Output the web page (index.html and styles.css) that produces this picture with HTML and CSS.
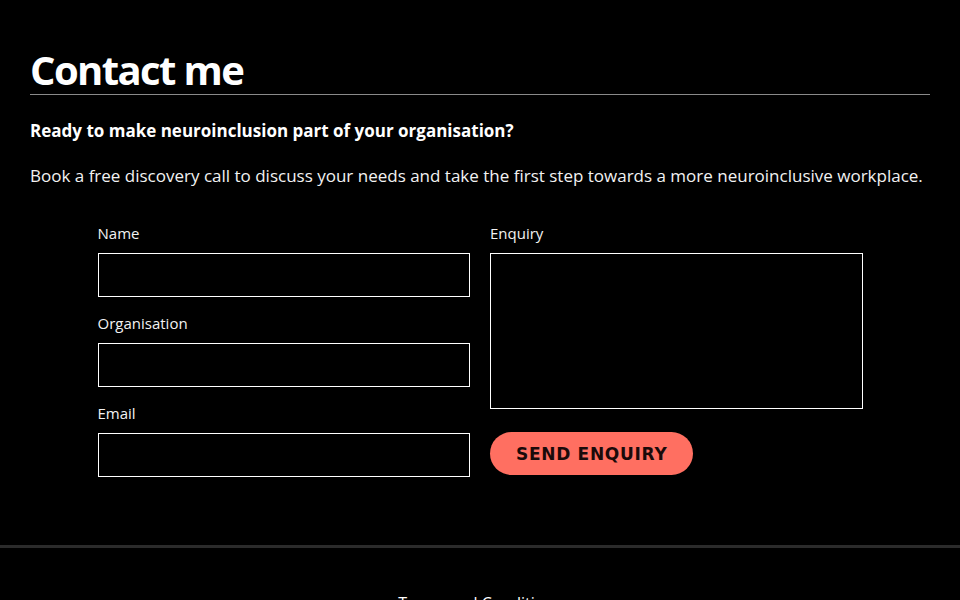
FILE: index.html
```html
<!DOCTYPE html>
<html lang="en">
<head>
    <meta charset="UTF-8">
    <meta name="viewport" content="width=device-width, initial-scale=1.0">
    <title>Contact me</title>
    <link rel="stylesheet" href="styles.css">
</head>
<body>
    <main class="contact">
        <h1>Contact me</h1>
        <p class="lead">Ready to make neuroinclusion part of your organisation?</p>
        <p class="intro">Book a free discovery call to discuss your needs and take the first step towards a more neuroinclusive workplace.</p>

        <form class="contact-form" onsubmit="return false;">
            <div class="col">
                <div class="form-group">
                    <label for="name">Name</label>
                    <input type="text" id="name">
                </div>
                <div class="form-group">
                    <label for="organisation">Organisation</label>
                    <input type="text" id="organisation">
                </div>
                <div class="form-group">
                    <label for="email">Email</label>
                    <input type="email" id="email">
                </div>
            </div>
            <div class="col">
                <div class="form-group">
                    <label for="enquiry">Enquiry</label>
                    <textarea id="enquiry"></textarea>
                </div>
                <button type="submit">Send enquiry</button>
            </div>
        </form>
    </main>

    <footer class="site-footer">
        <a href="#">Terms and Conditions</a>
    </footer>
</body>
</html>
```

FILE: styles.css
```css
body {
    font-family: "Open Sans", "Noto Sans", sans-serif;
    margin: 0;
    padding: 0;
    background-color: #000;
    color: #fff;
}
.contact {
    padding: 46px 30px 52px;
}
.contact h1 {
    font-size: 40px;
    font-weight: 700;
    letter-spacing: -1.6px;
    line-height: 48px;
    margin: 0;
    padding-bottom: 0;
    border-bottom: 1px solid #8a8a8a;
}
.lead {
    font-size: 17px;
    font-weight: 700;
    margin: 24px 0 0;
}
.intro {
    font-size: 17px;
    margin: 22px 0 0;
    color: #f2f2f2;
}
.contact-form {
    display: flex;
    gap: 20px;
    width: 765px;
    margin: 36px auto 0;
}
.col {
    flex: 1;
    display: flex;
    flex-direction: column;
}
.form-group {
    margin-bottom: 16px;
}
.form-group label {
    display: block;
    font-size: 15px;
    margin-bottom: 10px;
    color: #f2f2f2;
}
.form-group input, .form-group textarea {
    display: block;
    width: 100%;
    box-sizing: border-box;
    height: 44px;
    background: #000;
    color: #fff;
    border: 1px solid #fff;
    font: inherit;
    padding: 8px;
}
.form-group textarea {
    height: 156px;
    resize: none;
}
.contact-form button {
    align-self: flex-start;
    margin-top: 7px;
    padding: 0 26px;
    height: 43px;
    background-color: #ff6f61;
    color: #1a0a0a;
    border: none;
    border-radius: 22px;
    font-family: "DejaVu Sans", sans-serif;
    font-weight: 700;
    font-size: 17px;
    letter-spacing: 0.7px;
    text-transform: uppercase;
    cursor: pointer;
}
.site-footer {
    border-top: 3px solid #2b2b2b;
    text-align: center;
    padding: 44px 0 20px;
}
.site-footer a {
    color: #fff;
    font-size: 16px;
    text-decoration: none;
}
```
